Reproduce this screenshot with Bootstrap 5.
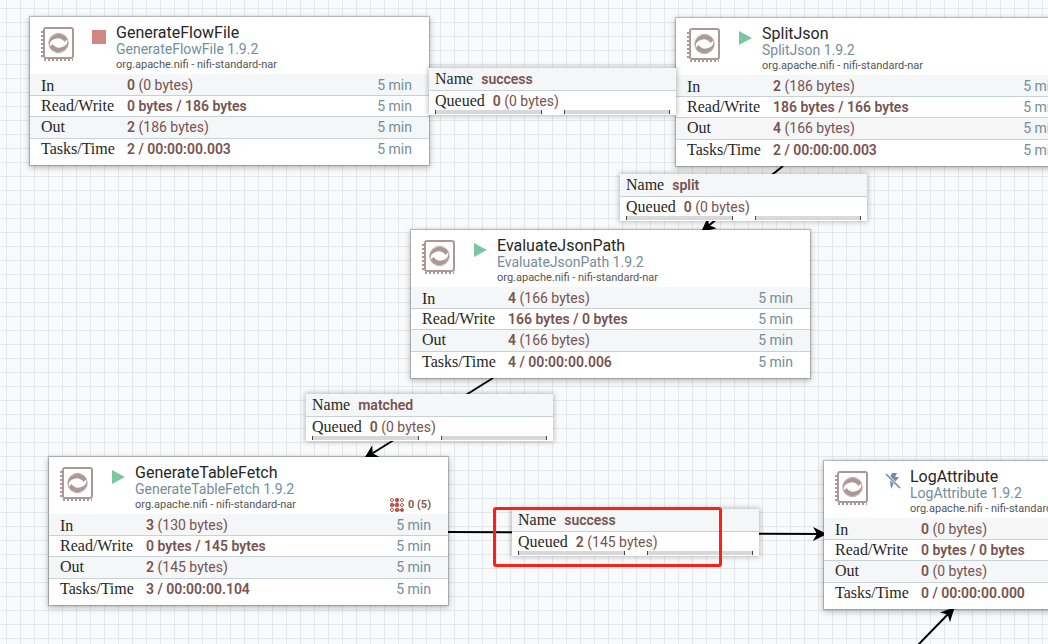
<!DOCTYPE html>
<html lang="en">
<head>
<meta charset="utf-8">
<meta name="viewport" content="width=device-width, initial-scale=1">
<title>NiFi Flow</title>
<link href="https://cdn.jsdelivr.net/npm/bootstrap@5.3.0/dist/css/bootstrap.min.css" rel="stylesheet">
<style>
  body { font-family: Roboto, "Liberation Sans", sans-serif; color: #262626; }
  .flow-canvas {
    background-color: #f9fafb;
    background-image:
      linear-gradient(to right, #e3e8eb 1px, transparent 1px),
      linear-gradient(to bottom, #e3e8eb 1px, transparent 1px);
    background-size: 14px 14px;
    background-position: 6px 8px;
  }
  /* processors */
  .processor { width: 399px; box-shadow: 0 0 1px 1px rgba(0,0,0,.2), 0 2px 6px 1px rgba(0,0,0,.24); }
  .proc-head { height: 57px; padding: 7px 17px 0 10px; }
  .proc-icon { width: 36px; height: 36px; margin-top: 2px; }
  .state-icon { width: 16px; height: 16px; margin: 5px 8px 0 15px; }
  .proc-text { padding-left: 1px; }
  .proc-name { font-size: 16px; line-height: 18px; }
  .proc-type { font-size: 14px; line-height: 15px; color: #728e9b; }
  .proc-bundle { font-size: 11px; line-height: 15px; color: #555; }
  .threads { font-size: 11px; line-height: 14px; padding-bottom: 2px; color: #775351; }
  .stats { table-layout: fixed; line-height: 20px; font-size: 14px; color: #775351; }
  .stats th, .stats td { height: 21px; padding: 0; border-bottom: 1px solid #c7d2d7; white-space: nowrap; }
  .stats tr:nth-child(odd) { background: #f4f6f7; }
  .stats tr:first-child > * { padding-top: 1px; line-height: 19px; vertical-align: bottom; }
  .stats tr:nth-child(3) > * { height: 22px; }
  .stats tr:last-child > * { height: 27px; border: 0; padding-bottom: 6px; }
  .stats th { width: 97px; padding-left: 11px; }
  .stats td:last-child { width: 60px; padding-right: 17px; color: #728e9b; text-align: right; }
  .stats b, .connection b { font-weight: 600; }
  .stat-label { font-family: "Roboto Slab", "Liberation Serif", serif; font-size: 16px; font-weight: 400; color: #262626; }
  /* connections */
  .connection { width: 247px; font-size: 14px; line-height: 20px; color: #775351; box-shadow: 0 0 5px 1px rgba(0,0,0,.25); }
  .conn-name { height: 23px; padding: 1px 6px; background: #f4f6f7; border-bottom: 1px solid #c7d2d7; }
  .conn-queue { height: 19px; padding: 0 6px; }
  .limits { padding: 0 6px 1px; gap: 22px; }
  .limit { height: 4px; background: #d8d8d8; border: solid #444; border-width: 0 1px; }
  /* places of the nodes on the canvas */
  #generate-flow-file { left: 30px; top: 17px; }
  #split-json { left: 676px; top: 18px; }
  #evaluate-json-path { left: 411px; top: 230px; }
  #generate-table-fetch { left: 49px; top: 457px; }
  #log-attribute { left: 824px; top: 461px; }
  #conn-generated { left: 429px; top: 68px; }
  #conn-split { left: 620px; top: 174px; }
  #conn-matched { left: 306px; top: 394px; }
  #conn-fetched { left: 512px; top: 509px; }
  #highlight { left: 493px; top: 507px; width: 229px; height: 60px; border: 3px solid #fd2015; border-radius: 3px; }
</style>
</head>
<body>
<svg class="d-none" aria-hidden="true">
  <symbol id="i-proc" viewBox="0 0 36 36">
    <rect x="4" y="2" width="29" height="30" rx="2" fill="#fff" stroke="#ad9897" stroke-width="2"/>
    <path d="M2 5v28M4 34h29" fill="none" stroke="#ad9897" stroke-width="2" stroke-dasharray="2 2"/>
    <path d="M9 20A10 10 0 0 1 27.500 13L24.500 16A8.600 8.600 0 0 0 9 20ZM28 14A10 10 0 0 1 9.500 21L12.500 18A8.600 8.600 0 0 0 28 14Z" fill="#ad9897"/>
    <circle cx="18.500" cy="17" r="9.700" fill="none" stroke="#ad9897" stroke-width=".8"/>
  </symbol>
  <symbol id="i-run" viewBox="0 0 16 16"><path d="M2 1 15 8 2 15Z" fill="#7dc7a0"/></symbol>
  <symbol id="i-stop" viewBox="0 0 16 16"><path d="M1 1h14v14H1Z" fill="#d18686"/></symbol>
  <symbol id="i-off" viewBox="0 0 16 16">
    <path d="M7 0h5L10 4h4L10 9 7 6 5 4ZM5 7l4 3-3 6Z" fill="#728e9b"/><path d="M1 1 15 15" stroke="#f9fafb" stroke-width="3"/><path d="M1 1 15 15" stroke="#728e9b" stroke-width="1.500"/>
  </symbol>
  <symbol id="i-threads" viewBox="0 0 14 14">
    <g fill="#ba554a" stroke="#ba554a"><path d="M2 7h5M7 2v5M7 12h5" stroke-width="1"/><circle cx="2" cy="2" r="1.500" fill="#fff"/><circle cx="7" cy="2" r="1.800"/><circle cx="12" cy="2" r="1.500" fill="#fff"/><circle cx="2" cy="7" r="1.800"/><circle cx="7" cy="7" r="1.800"/><circle cx="12" cy="7" r="1.500" fill="#fff"/><circle cx="2" cy="12" r="1.500" fill="#fff"/><circle cx="7" cy="12" r="1.800"/><circle cx="12" cy="12" r="1.500"/></g>
  </symbol>
</svg>

<main class="flow-canvas position-relative overflow-hidden vh-100">
  <svg class="position-absolute top-0 start-0 w-100 h-100" aria-hidden="true">
    <defs>
      <marker id="arrow" markerUnits="userSpaceOnUse" markerWidth="14" markerHeight="14" refX="13" refY="7" orient="auto"><path d="M0 0 14 7 0 14 4 7Z"/></marker>
    </defs>
    <g stroke="#000" stroke-width="2" fill="none" marker-end="url(#arrow)">
      <path d="M430 92H678"/>
      <path d="M783 166 702 231"/>
      <path d="M493 378 365 458"/>
      <path d="M448 532 826 534"/>
      <path d="M918 645 954 608"/>
    </g>
  </svg>

  <article class="processor bg-white position-absolute" id="generate-flow-file">
    <header class="proc-head d-flex">
      <svg class="proc-icon flex-shrink-0"><use href="#i-proc"/></svg>
      <svg class="state-icon flex-shrink-0"><use href="#i-stop"/></svg>
      <div class="proc-text flex-grow-1"><div class="proc-name">GenerateFlowFile</div><div class="proc-type">GenerateFlowFile 1.9.2</div><div class="proc-bundle">org.apache.nifi - nifi-standard-nar</div></div>
    </header>
    <table class="stats w-100">
      <tr><th class="stat-label" scope="row">In</th><td><b>0</b> (0 bytes)</td><td>5 min</td></tr>
      <tr><th class="stat-label" scope="row">Read/Write</th><td><b>0 bytes / 186 bytes</b></td><td>5 min</td></tr>
      <tr><th class="stat-label" scope="row">Out</th><td><b>2</b> (186 bytes)</td><td>5 min</td></tr>
      <tr><th class="stat-label" scope="row">Tasks/Time</th><td><b>2 / 00:00:00.003</b></td><td>5 min</td></tr>
    </table>
  </article>

  <article class="processor bg-white position-absolute" id="split-json">
    <header class="proc-head d-flex">
      <svg class="proc-icon flex-shrink-0"><use href="#i-proc"/></svg>
      <svg class="state-icon flex-shrink-0"><use href="#i-run"/></svg>
      <div class="proc-text flex-grow-1"><div class="proc-name">SplitJson</div><div class="proc-type">SplitJson 1.9.2</div><div class="proc-bundle">org.apache.nifi - nifi-standard-nar</div></div>
    </header>
    <table class="stats w-100">
      <tr><th class="stat-label" scope="row">In</th><td><b>2</b> (186 bytes)</td><td>5 min</td></tr>
      <tr><th class="stat-label" scope="row">Read/Write</th><td><b>186 bytes / 166 bytes</b></td><td>5 min</td></tr>
      <tr><th class="stat-label" scope="row">Out</th><td><b>4</b> (166 bytes)</td><td>5 min</td></tr>
      <tr><th class="stat-label" scope="row">Tasks/Time</th><td><b>2 / 00:00:00.003</b></td><td>5 min</td></tr>
    </table>
  </article>

  <article class="processor bg-white position-absolute" id="evaluate-json-path">
    <header class="proc-head d-flex">
      <svg class="proc-icon flex-shrink-0"><use href="#i-proc"/></svg>
      <svg class="state-icon flex-shrink-0"><use href="#i-run"/></svg>
      <div class="proc-text flex-grow-1"><div class="proc-name">EvaluateJsonPath</div><div class="proc-type">EvaluateJsonPath 1.9.2</div><div class="proc-bundle">org.apache.nifi - nifi-standard-nar</div></div>
    </header>
    <table class="stats w-100">
      <tr><th class="stat-label" scope="row">In</th><td><b>4</b> (166 bytes)</td><td>5 min</td></tr>
      <tr><th class="stat-label" scope="row">Read/Write</th><td><b>166 bytes / 0 bytes</b></td><td>5 min</td></tr>
      <tr><th class="stat-label" scope="row">Out</th><td><b>4</b> (166 bytes)</td><td>5 min</td></tr>
      <tr><th class="stat-label" scope="row">Tasks/Time</th><td><b>4 / 00:00:00.006</b></td><td>5 min</td></tr>
    </table>
  </article>

  <article class="processor bg-white position-absolute" id="generate-table-fetch">
    <header class="proc-head d-flex">
      <svg class="proc-icon flex-shrink-0"><use href="#i-proc"/></svg>
      <svg class="state-icon flex-shrink-0"><use href="#i-run"/></svg>
      <div class="proc-text flex-grow-1"><div class="proc-name">GenerateTableFetch</div><div class="proc-type">GenerateTableFetch 1.9.2</div><div class="proc-bundle">org.apache.nifi - nifi-standard-nar</div></div>
      <div class="threads d-flex align-items-center align-self-end gap-1"><svg width="14" height="14"><use href="#i-threads"/></svg><span class="fw-semibold">0 (5)</span></div>
    </header>
    <table class="stats w-100">
      <tr><th class="stat-label" scope="row">In</th><td><b>3</b> (130 bytes)</td><td>5 min</td></tr>
      <tr><th class="stat-label" scope="row">Read/Write</th><td><b>0 bytes / 145 bytes</b></td><td>5 min</td></tr>
      <tr><th class="stat-label" scope="row">Out</th><td><b>2</b> (145 bytes)</td><td>5 min</td></tr>
      <tr><th class="stat-label" scope="row">Tasks/Time</th><td><b>3 / 00:00:00.104</b></td><td>5 min</td></tr>
    </table>
  </article>

  <article class="processor bg-white position-absolute" id="log-attribute">
    <header class="proc-head d-flex">
      <svg class="proc-icon flex-shrink-0"><use href="#i-proc"/></svg>
      <svg class="state-icon flex-shrink-0"><use href="#i-off"/></svg>
      <div class="proc-text flex-grow-1"><div class="proc-name">LogAttribute</div><div class="proc-type">LogAttribute 1.9.2</div><div class="proc-bundle">org.apache.nifi - nifi-standard-nar</div></div>
    </header>
    <table class="stats w-100">
      <tr><th class="stat-label" scope="row">In</th><td><b>0</b> (0 bytes)</td><td>5 min</td></tr>
      <tr><th class="stat-label" scope="row">Read/Write</th><td><b>0 bytes / 0 bytes</b></td><td>5 min</td></tr>
      <tr><th class="stat-label" scope="row">Out</th><td><b>0</b> (0 bytes)</td><td>5 min</td></tr>
      <tr><th class="stat-label" scope="row">Tasks/Time</th><td><b>0 / 00:00:00.000</b></td><td>5 min</td></tr>
    </table>
  </article>

  <section class="connection bg-white position-absolute" id="conn-generated">
    <div class="conn-name d-flex gap-2"><span class="stat-label">Name</span><b>success</b></div>
    <div class="conn-queue d-flex gap-2"><span class="stat-label">Queued</span><span><b>0</b> (0 bytes)</span></div>
    <div class="limits d-flex"><div class="limit flex-fill"></div><div class="limit flex-fill"></div></div>
  </section>
  <section class="connection bg-white position-absolute" id="conn-split">
    <div class="conn-name d-flex gap-2"><span class="stat-label">Name</span><b>split</b></div>
    <div class="conn-queue d-flex gap-2"><span class="stat-label">Queued</span><span><b>0</b> (0 bytes)</span></div>
    <div class="limits d-flex"><div class="limit flex-fill"></div><div class="limit flex-fill"></div></div>
  </section>
  <section class="connection bg-white position-absolute" id="conn-matched">
    <div class="conn-name d-flex gap-2"><span class="stat-label">Name</span><b>matched</b></div>
    <div class="conn-queue d-flex gap-2"><span class="stat-label">Queued</span><span><b>0</b> (0 bytes)</span></div>
    <div class="limits d-flex"><div class="limit flex-fill"></div><div class="limit flex-fill"></div></div>
  </section>
  <section class="connection bg-white position-absolute" id="conn-fetched">
    <div class="conn-name d-flex gap-2"><span class="stat-label">Name</span><b>success</b></div>
    <div class="conn-queue d-flex gap-2"><span class="stat-label">Queued</span><span><b>2</b> (145 bytes)</span></div>
    <div class="limits d-flex"><div class="limit flex-fill"></div><div class="limit flex-fill"></div></div>
  </section>
  <div class="position-absolute" id="highlight"></div>
</main>
<script src="https://cdn.jsdelivr.net/npm/bootstrap@5.3.0/dist/js/bootstrap.bundle.min.js"></script>
</body>
</html>
